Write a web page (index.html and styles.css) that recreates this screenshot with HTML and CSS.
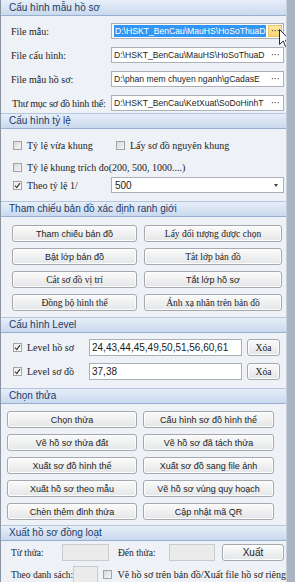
FILE: index.html
```html
<!DOCTYPE html>
<html lang="vi">
<head>
<meta charset="utf-8">
<title>Cấu hình</title>
<link rel="stylesheet" href="styles.css">
</head>
<body>
<div class="panel">
  <div class="hdr hdr-first">Cấu hình mẫu hồ sơ</div>
  <div class="sec s1">
    <div class="frow"><span class="lbl">File mẫu:</span><div class="field"><span class="ftext"><span class="hl">D:\HSKT_BenCau\MauHS\HoSoThuaD</span></span><span class="dots hot">···</span></div></div>
    <div class="frow"><span class="lbl">File cấu hình:</span><div class="field"><span class="ftext">D:\HSKT_BenCau\MauHS\HoSoThuaD</span><span class="dots">···</span></div></div>
    <div class="frow"><span class="lbl">File mẫu hồ sơ:</span><div class="field"><span class="ftext">D:\phan mem chuyen nganh\gCadasE</span><span class="dots">···</span></div></div>
    <div class="frow"><span class="lbl lbl-tight">Thư mục sơ đồ hình thể:</span><div class="field"><span class="ftext">D:\HSKT_BenCau\KetXuat\SoDoHinhT</span><span class="dots">···</span></div></div>
  </div>

  <div class="hdr">Cấu hình tỷ lệ</div>
  <div class="sec s2">
    <div class="crow">
      <span class="citem c-first"><span class="cb"></span><span class="ctext">Tỷ lệ vừa khung</span></span>
      <span class="citem"><span class="cb"></span><span class="ctext">Lấy sơ đồ nguyên khung</span></span>
    </div>
    <div class="crow crow2">
      <span class="citem"><span class="cb"></span><span class="ctext">Tỷ lệ khung trích đo(200, 500, 1000....)</span></span>
    </div>
    <div class="crow crow3">
      <span class="citem c-scale"><span class="cb checked"><svg viewBox="0 0 9 9" width="9" height="9"><path d="M2 4.6 L3.8 6.6 L7 2.2" fill="none" stroke="#3a3a3a" stroke-width="1.2"/></svg></span><span class="ctext">Theo tỷ lệ 1/</span></span>
      <div class="select"><span class="stext">500</span><span class="arrow"></span></div>
    </div>
  </div>

  <div class="hdr">Tham chiếu bản đồ xác định ranh giới</div>
  <div class="sec bgrid g1">
    <button class="btn sans">Tham chiếu bản đồ</button>
    <button class="btn serif">Lấy đối tượng được chọn</button>
    <button class="btn sans">Bật lớp bản đồ</button>
    <button class="btn serif">Tắt lớp bản đồ</button>
    <button class="btn serif">Cắt sơ đồ vị trí</button>
    <button class="btn sans">Tắt lớp hồ sơ</button>
    <button class="btn serif">Đồng bộ hình thể</button>
    <button class="btn serif">Ánh xạ nhãn trên bản đồ</button>
  </div>

  <div class="hdr">Cấu hình Level</div>
  <div class="sec s4">
    <div class="lrow">
      <span class="citem c-level"><span class="cb checked"><svg viewBox="0 0 9 9" width="9" height="9"><path d="M2 4.6 L3.8 6.6 L7 2.2" fill="none" stroke="#3a3a3a" stroke-width="1.2"/></svg></span><span class="ctext">Level hồ sơ</span></span>
      <div class="lfield">24,43,44,45,49,50,51,56,60,61</div>
      <button class="btn serif xoa">Xóa</button>
    </div>
    <div class="lrow">
      <span class="citem c-level"><span class="cb checked"><svg viewBox="0 0 9 9" width="9" height="9"><path d="M2 4.6 L3.8 6.6 L7 2.2" fill="none" stroke="#3a3a3a" stroke-width="1.2"/></svg></span><span class="ctext">Level sơ đồ</span></span>
      <div class="lfield">37,38</div>
      <button class="btn serif xoa">Xóa</button>
    </div>
  </div>

  <div class="hdr">Chọn thửa</div>
  <div class="sec bgrid g2">
    <button class="btn sans">Chọn thửa</button>
    <button class="btn sans">Cấu hình sơ đồ hình thể</button>
    <button class="btn sans">Vẽ hồ sơ thửa đất</button>
    <button class="btn sans">Vẽ hồ sơ đã tách thửa</button>
    <button class="btn sans">Xuất sơ đồ hình thể</button>
    <button class="btn sans">Xuất sơ đồ sang file ảnh</button>
    <button class="btn sans">Xuất hồ sơ theo mẫu</button>
    <button class="btn sans">Vẽ hồ sơ vùng quy hoạch</button>
    <button class="btn sans">Chèn thêm đỉnh thửa</button>
    <button class="btn sans">Cập nhật mã QR</button>
  </div>

  <div class="hdr">Xuất hồ sơ đồng loạt</div>
  <div class="sec s6">
    <div class="xrow">
      <span class="xlbl w-tu">Từ thửa:</span>
      <div class="xfield w46"></div>
      <span class="xlbl w-den">Đến thửa:</span>
      <div class="xfield w45"></div>
      <button class="btn sans xuat">Xuất</button>
    </div>
    <div class="xrow">
      <span class="xlbl w-ds">Theo danh sách:</span>
      <div class="xfield w35"></div>
      <span class="cb cb-x"></span>
      <span class="ctext">Vẽ hồ sơ trên bản đồ/Xuất file hồ sơ riêng</span>
    </div>
  </div>

  <svg class="cursor" viewBox="0 0 12 19" width="12" height="19"><path d="M0.5 0.5 L0.5 15.5 L4.2 12 L6.8 17.8 L9 16.8 L6.5 11.2 L11 11.2 Z" fill="#fff" stroke="#2b2b2b" stroke-width="1" stroke-linejoin="round"/></svg>
</div>
</body>
</html>
```

FILE: styles.css
```css
html, body {
  margin: 0;
  padding: 0;
}
body {
  width: 295px;
  height: 582px;
  overflow: hidden;
  background: #a9b3c1;
}
.panel {
  position: relative;
  width: 287px;
  height: 582px;
  overflow: hidden;
  box-sizing: border-box;
  background: #eef1f6;
  border-left: 1px solid #8a94a2;
  border-right: 1px solid #c6cfda;
  font-family: "Liberation Sans", Arial, sans-serif;
  color: #1c1c1c;
}
.hdr {
  height: 16px;
  box-sizing: border-box;
  background: linear-gradient(#e7eef9, #c9d9ee);
  border-top: 1px solid #b3c6df;
  border-bottom: 1px solid #97b0d2;
  color: #1b3a66;
  font-size: 10px;
  line-height: 14px;
  padding-left: 8px;
  white-space: nowrap;
}
.hdr-first {
  border-top: none;
  line-height: 15px;
}

/* section 1 */
.s1 {
  padding: 7px 0 2px 0;
  display: flex;
  flex-direction: column;
  gap: 8px;
}
.frow {
  display: flex;
  align-items: center;
  height: 16px;
}
.lbl {
  width: 110px;
  padding-left: 10px;
  box-sizing: border-box;
  font-family: "Liberation Serif", "Times New Roman", serif;
  font-size: 10px;
  white-space: nowrap;
}
.lbl-tight {
  padding-left: 11px;
  letter-spacing: -0.2px;
}
.field {
  width: 173px;
  height: 16px;
  box-sizing: border-box;
  border: 1px solid #abb0b8;
  background: #fff;
  display: flex;
  align-items: center;
  overflow: hidden;
  white-space: nowrap;
  font-size: 8.6px;
}
.ftext {
  flex: 1;
  overflow: hidden;
  padding-left: 2px;
  line-height: 12px;
}
.hl {
  background: #3296f4;
  color: #fff;
  display: inline-block;
  padding: 0 1px;
}
.dots {
  width: 14px;
  height: 12px;
  flex: none;
  text-align: center;
  font-size: 10px;
  line-height: 12px;
  color: #333;
  letter-spacing: -0.5px;
  margin-right: 1px;
}
.dots.hot {
  background: linear-gradient(#fdeaa8, #f7d270);
  border: 1px solid #e8c567;
  box-sizing: border-box;
  line-height: 10px;
}

/* checkboxes */
.cb {
  display: inline-block;
  width: 9px;
  height: 9px;
  box-sizing: border-box;
  border: 1px solid #a3a3a3;
  background: linear-gradient(135deg, #d8d8d8, #f6f6f6);
  margin-right: 5px;
  flex: none;
  position: relative;
}
.cb svg {
  position: absolute;
  left: -1px;
  top: -1px;
}
.cb.checked {
  background: linear-gradient(135deg, #ececec, #ffffff);
}
.citem {
  display: flex;
  align-items: center;
  padding-left: 12px;
  box-sizing: border-box;
  white-space: nowrap;
}
.ctext {
  font-family: "Liberation Serif", "Times New Roman", serif;
  font-size: 10px;
  white-space: nowrap;
}

/* section 2 */
.s2 {
  padding: 8px 0 8px 0;
  display: flex;
  flex-direction: column;
}
.crow {
  height: 16px;
  display: flex;
  align-items: center;
}
.crow2 { margin-top: 6px; }
.crow3 { margin-top: 2px; }
.c-first { width: 115px; }
.c-first + .citem { padding-left: 0; }
.c-scale { width: 110px; }
.select {
  width: 173px;
  height: 16px;
  box-sizing: border-box;
  border: 1px solid #abb0b8;
  background: #fff;
  display: flex;
  align-items: center;
  justify-content: space-between;
  font-size: 10px;
}
.stext { padding-left: 3px; }
.arrow {
  width: 0;
  height: 0;
  border-left: 2.5px solid transparent;
  border-right: 2.5px solid transparent;
  border-top: 3px solid #444;
  margin-right: 5px;
}

/* buttons */
.bgrid {
  display: grid;
  row-gap: 6px;
}
.g1 {
  grid-template-columns: 125px 138px;
  column-gap: 7px;
  padding: 8px 0 6px 11px;
}
.g2 {
  grid-template-columns: 130px 131px;
  column-gap: 6px;
  padding: 7px 0 5px 6px;
}
.btn {
  height: 17px;
  margin: 0;
  padding: 0;
  box-sizing: border-box;
  border: 1px solid #a5a8ad;
  border-radius: 3px;
  background: linear-gradient(#fbfbfb, #e4e5e7);
  box-shadow: inset 0 0 0 1px #fdfdfd;
  color: #222;
  white-space: nowrap;
  overflow: hidden;
}
.btn.sans {
  font-family: "Liberation Sans", Arial, sans-serif;
  font-size: 9px;
}
.btn.serif {
  font-family: "Liberation Serif", "Times New Roman", serif;
  font-size: 9.5px;
}

/* level */
.s4 {
  padding: 6px 0 8px 0;
  display: flex;
  flex-direction: column;
  gap: 7px;
}
.lrow {
  display: flex;
  align-items: center;
  height: 17px;
}
.c-level { width: 88px; }
.lfield {
  width: 153px;
  height: 17px;
  box-sizing: border-box;
  border: 1px solid #abb0b8;
  background: #fff;
  font-size: 10px;
  line-height: 15px;
  padding-left: 2px;
}
.xoa {
  width: 33px;
  margin-left: 5px;
}

/* batch export */
.s6 {
  padding: 3px 0 0 0;
  display: flex;
  flex-direction: column;
  gap: 5px;
}
.xrow {
  display: flex;
  align-items: center;
  height: 17px;
}
.xlbl {
  font-family: "Liberation Serif", "Times New Roman", serif;
  font-size: 9.5px;
  white-space: nowrap;
  box-sizing: border-box;
}
.w-tu { width: 61px; padding-left: 10px; }
.w-den { width: 60px; padding-left: 9px; }
.w-ds { width: 72px; padding-left: 10px; }
.xfield {
  height: 17px;
  box-sizing: border-box;
  border: 1px solid #c9cbce;
  background: #ebebec;
}
.w46 { width: 47px; }
.w45 { width: 46px; }
.w35 { width: 36px; }
.xuat {
  width: 62px;
  margin-left: 7px;
  font-size: 10px !important;
}
.cb-x {
  margin-left: 5px;
}

.cursor {
  position: absolute;
  left: 278px;
  top: 29px;
}
```
